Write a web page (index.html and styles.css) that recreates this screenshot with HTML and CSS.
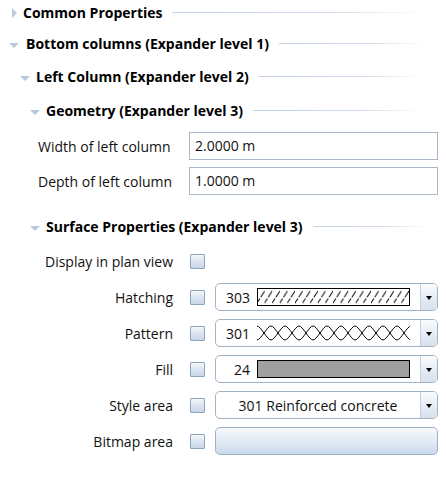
FILE: index.html
```html
<!DOCTYPE html>
<html>
<head>
<meta charset="utf-8">
<link rel="stylesheet" href="styles.css">
</head>
<body>
<div class="panel">
  <div class="hdr lvl0 collapsed"><span class="tri-r"></span><span class="title">Common Properties</span><span class="line"></span></div>

  <div class="hdr lvl1"><span class="tri-d"></span><span class="title">Bottom columns (Expander level 1)</span><span class="line"></span></div>

  <div class="hdr lvl2"><span class="tri-d"></span><span class="title">Left Column (Expander level 2)</span><span class="line"></span></div>

  <div class="hdr lvl3"><span class="tri-d"></span><span class="title">Geometry (Expander level 3)</span><span class="line"></span></div>

  <div class="geo">
    <div class="glabel">Width of left column</div>
    <div class="tinput">2.0000 m</div>
    <div class="glabel">Depth of left column</div>
    <div class="tinput">1.0000 m</div>
  </div>

  <div class="hdr lvl3 surf"><span class="tri-d"></span><span class="title">Surface Properties (Expander level 3)</span><span class="line"></span></div>

  <div class="surface">
    <div class="slabel">Display in plan view</div>
    <div class="cb"></div>
    <div class="ctrl"></div>

    <div class="slabel">Hatching</div>
    <div class="cb"></div>
    <div class="combo">
      <div class="combo-main">
        <span class="num">303</span>
        <svg class="swatch" width="153" height="18" viewBox="0 0 153 18">
          <defs>
            <pattern id="hatch" width="7.6" height="18" patternUnits="userSpaceOnUse">
              <line x1="-2" y1="18" x2="9.6" y2="0" stroke="#000" stroke-width="1" stroke-dasharray="9 1.5"/>
            </pattern>
          </defs>
          <rect x="0.5" y="0.5" width="152" height="17" fill="url(#hatch)" stroke="#000"/>
        </svg>
      </div>
      <div class="combo-btn"><span class="arrow"></span></div>
    </div>

    <div class="slabel">Pattern</div>
    <div class="cb"></div>
    <div class="combo">
      <div class="combo-main">
        <span class="num">301</span>
        <svg class="swatch" width="153" height="18" viewBox="0 0 153 18">
          <defs>
            <pattern id="waves" width="14" height="18" patternUnits="userSpaceOnUse">
              <path d="M0 2 C4 2 10 16 14 16" fill="none" stroke="#000" stroke-width="1"/>
              <path d="M0 16 C4 16 10 2 14 2" fill="none" stroke="#000" stroke-width="1"/>
            </pattern>
          </defs>
          <rect x="0" y="0" width="153" height="18" fill="url(#waves)"/>
        </svg>
      </div>
      <div class="combo-btn"><span class="arrow"></span></div>
    </div>

    <div class="slabel">Fill</div>
    <div class="cb"></div>
    <div class="combo">
      <div class="combo-main">
        <span class="num">24</span>
        <span class="fillbox"></span>
      </div>
      <div class="combo-btn"><span class="arrow"></span></div>
    </div>

    <div class="slabel">Style area</div>
    <div class="cb"></div>
    <div class="combo">
      <div class="combo-main center">301 Reinforced concrete</div>
      <div class="combo-btn"><span class="arrow"></span></div>
    </div>

    <div class="slabel">Bitmap area</div>
    <div class="cb"></div>
    <div class="bitmap"></div>
  </div>
</div>
</body>
</html>
```

FILE: styles.css
```css
* { box-sizing: border-box; }
html, body {
  margin: 0;
  padding: 0;
  background: #fff;
}
body {
  font-family: "Open Sans", "Noto Sans", "DejaVu Sans", sans-serif;
  font-size: 14px;
  color: #111;
}
.panel {
  width: 446px;
  height: 477px;
  padding-right: 20px;
}

/* expander headers */
.hdr {
  display: flex;
  align-items: center;
  height: 24px;
  font-weight: bold;
  color: #000;
}
.hdr .title { white-space: nowrap; }
.hdr .line {
  flex: 1;
  height: 1px;
  margin-left: 10px;
  margin-top: 1px;
  background: linear-gradient(to right, #c3d1e2 0%, #cfdbe8 60%, rgba(255,255,255,0) 100%);
}
.lvl0 { padding-left: 12px; }
.lvl1 { padding-left: 9px; margin-top: 7px; }
.lvl2 { padding-left: 20px; margin-top: 9px; }
.lvl3 { padding-left: 30px; margin-top: 10px; }
.lvl3.surf { margin-top: 19px; }

.tri-r {
  width: 0; height: 0;
  border-top: 5px solid transparent;
  border-bottom: 5px solid transparent;
  border-left: 5px solid #bccce0;
  margin-right: 6px;
  margin-top: 1px;
}
.tri-d {
  width: 0; height: 0;
  border-left: 5px solid transparent;
  border-right: 5px solid transparent;
  border-top: 5px solid #b7c8dc;
  margin-right: 6px;
  margin-top: 4px;
}
.lvl1 .tri-d { margin-right: 7px; }

/* geometry grid */
.geo {
  display: grid;
  grid-template-columns: 135px 249px;
  column-gap: 16px;
  row-gap: 7px;
  padding-left: 38px;
  margin-top: 10px;
  align-items: center;
}
.glabel { white-space: nowrap; }
.tinput {
  height: 28px;
  border: 1px solid #a9b7c7;
  padding-left: 5px;
  line-height: 26px;
  background: #fff;
}

/* surface grid */
.surface {
  display: grid;
  grid-template-columns: 173px 42px 223px;
  row-gap: 8px;
  margin-top: 9px;
  align-items: center;
  grid-auto-rows: 28px;
}
.slabel { text-align: right; white-space: nowrap; }
.cb {
  width: 15px;
  height: 15px;
  margin-left: 17px;
  border: 1px solid #8fa5bf;
  border-radius: 1px;
  background: linear-gradient(to bottom, #f4f7fb 0%, #dbe5f0 50%, #c8d7e9 100%);
}

.combo {
  height: 28px;
  display: flex;
  border: 1px solid #a3b3c6;
  border-radius: 5px;
  background: #fff;
  overflow: hidden;
}
.combo-main {
  flex: 1;
  display: flex;
  align-items: center;
}
.combo-main.center { justify-content: center; }
.num {
  width: 34px;
  text-align: right;
  margin-right: 7px;
}
.swatch { display: block; }
.fillbox {
  width: 153px;
  height: 18px;
  border: 1px solid #000;
  background: #a0a0a0;
}
.combo-btn {
  width: 17px;
  border-left: 1px solid #c3cedb;
  background: linear-gradient(to bottom, #fbfcfe 0%, #e6edf5 50%, #d6e2ef 100%);
  display: flex;
  align-items: center;
  justify-content: center;
}
.arrow {
  width: 0; height: 0;
  border-left: 3.5px solid transparent;
  border-right: 3.5px solid transparent;
  border-top: 4px solid #000;
  margin-top: 1px;
}
.bitmap {
  height: 28px;
  border: 1px solid #a0b1c5;
  border-radius: 5px;
  background: linear-gradient(to bottom, #f7f9fc 0%, #e3ebf4 50%, #c9d9eb 100%);
}
```
